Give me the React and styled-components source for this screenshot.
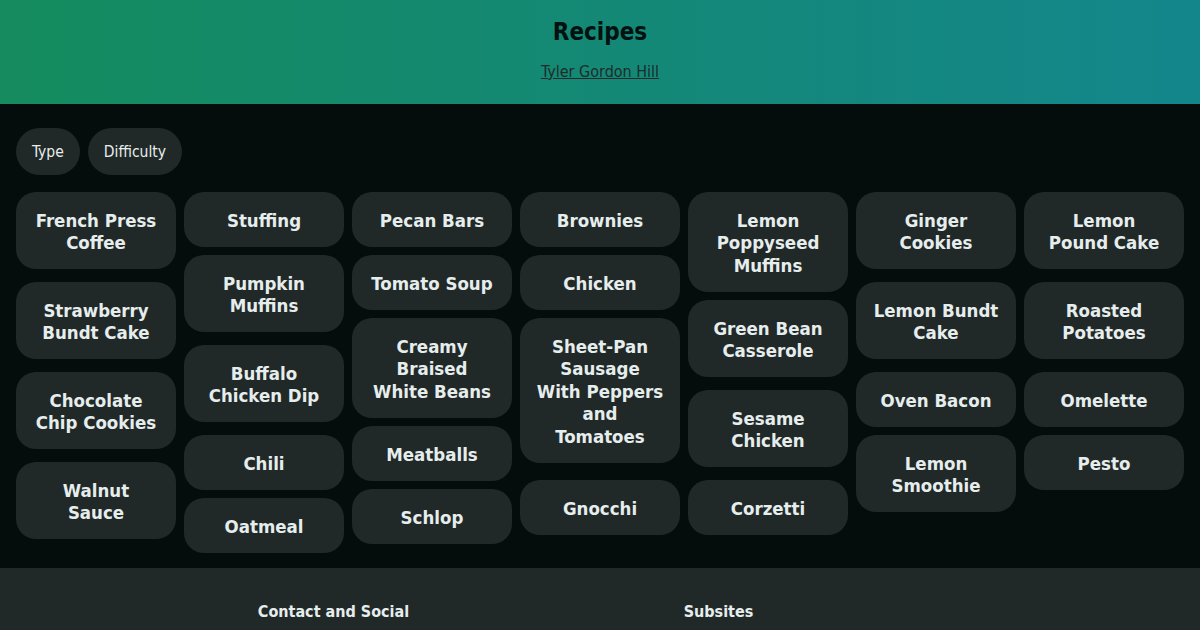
import React from 'react';
import styled, { createGlobalStyle } from 'styled-components';

const GlobalStyle = createGlobalStyle`
  body {
    margin: 0;
    background: #040c0c;
    font-family: "DejaVu Sans Condensed", "DejaVu Sans", Verdana, sans-serif;
    color: #e6eeed;
  }
`;

const Header = styled.header`
  height: 104px;
  box-sizing: border-box;
  padding-top: 17px;
  text-align: center;
  background: linear-gradient(90deg, #158b5e 0%, #13868c 100%);
`;

const Title = styled.h1`
  margin: 0;
  font-size: 24px;
  line-height: 30px;
  font-weight: bold;
  color: #031110;
`;

const Author = styled.a`
  display: inline-block;
  margin-top: 15px;
  font-size: 16px;
  color: #1f2c2b;
  text-decoration: underline;
`;

const Main = styled.main`
  padding: 24px 16px 7px;
`;

const Filters = styled.div`
  display: flex;
  gap: 8px;
  margin-bottom: 17px;
`;

const Chip = styled.button`
  font: inherit;
  font-size: 15.5px;
  line-height: 23px;
  padding: 13px 16px 11px;
  border: none;
  border-radius: 999px;
  background: #212828;
  color: #e6eeed;
`;

const Board = styled.div`
  display: grid;
  grid-template-columns: repeat(7, 160px);
  grid-auto-rows: 9px;
  grid-auto-flow: row dense;
  column-gap: 8px;
`;

const Card = styled.div`
  grid-column: ${p => p.$col};
  grid-row: span ${p => p.$span};
  align-self: start;
  padding: 17.5px 10px 14.5px;
  border-radius: 20px;
  background: #212828;
  color: #e6eeed;
  font-size: 18.5px;
  line-height: 22.5px;
  font-weight: bold;
  text-align: center;
  white-space: pre-line;
`;

const Footer = styled.footer`
  background: #212828;
  padding: 34px 0 40px;
`;

const FooterCols = styled.div`
  display: grid;
  grid-template-columns: 385px 385px;
  margin-left: 141px;
`;

const FooterHeading = styled.h3`
  margin: 0;
  text-align: center;
  font-size: 16px;
  font-weight: bold;
  color: #e6eeed;
`;

const spans = { 1: 7, 2: 10, 3: 12, 5: 18 };

const columns = [
  ['French Press\nCoffee', 'Strawberry\nBundt Cake', 'Chocolate\nChip Cookies', 'Walnut\nSauce'],
  ['Stuffing', 'Pumpkin\nMuffins', 'Buffalo\nChicken Dip', 'Chili', 'Oatmeal'],
  ['Pecan Bars', 'Tomato Soup', 'Creamy\nBraised\nWhite Beans', 'Meatballs', 'Schlop'],
  ['Brownies', 'Chicken', 'Sheet-Pan\nSausage\nWith Peppers\nand\nTomatoes', 'Gnocchi'],
  ['Lemon\nPoppyseed\nMuffins', 'Green Bean\nCasserole', 'Sesame\nChicken', 'Corzetti'],
  ['Ginger\nCookies', 'Lemon Bundt\nCake', 'Oven Bacon', 'Lemon\nSmoothie'],
  ['Lemon\nPound Cake', 'Roasted\nPotatoes', 'Omelette', 'Pesto'],
];

export default function App() {
  return (
    <>
      <GlobalStyle />
      <Header>
        <Title>Recipes</Title>
        <Author href="#">Tyler Gordon Hill</Author>
      </Header>
      <Main>
        <Filters>
          <Chip>Type</Chip>
          <Chip>Difficulty</Chip>
        </Filters>
        <Board>
          {columns.map((list, c) =>
            list.map(name => (
              <Card key={name} $col={c + 1} $span={spans[name.split('\n').length]}>
                {name}
              </Card>
            ))
          )}
        </Board>
      </Main>
      <Footer>
        <FooterCols>
          <FooterHeading>Contact and Social</FooterHeading>
          <FooterHeading>Subsites</FooterHeading>
        </FooterCols>
      </Footer>
    </>
  );
}
